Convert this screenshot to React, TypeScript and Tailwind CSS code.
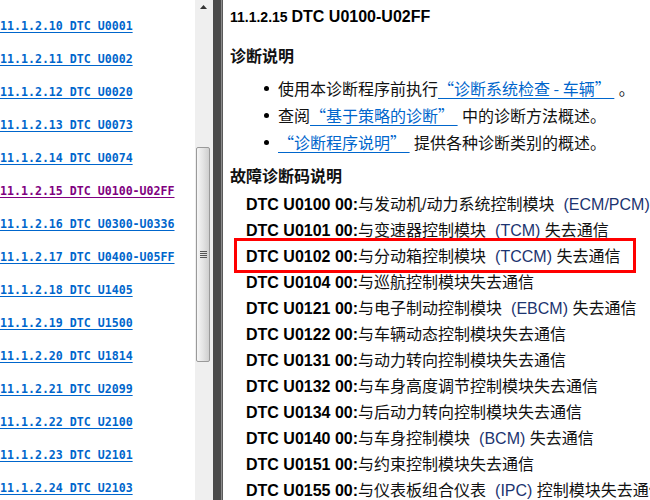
const tocLinks = [
  "11.1.2.10 DTC U0001",
  "11.1.2.11 DTC U0002",
  "11.1.2.12 DTC U0020",
  "11.1.2.13 DTC U0073",
  "11.1.2.14 DTC U0074",
  "11.1.2.15 DTC U0100-U02FF",
  "11.1.2.16 DTC U0300-U0336",
  "11.1.2.17 DTC U0400-U05FF",
  "11.1.2.18 DTC U1405",
  "11.1.2.19 DTC U1500",
  "11.1.2.20 DTC U1814",
  "11.1.2.21 DTC U2099",
  "11.1.2.22 DTC U2100",
  "11.1.2.23 DTC U2101",
  "11.1.2.24 DTC U2103",
];

type Dtc = { code: string; pre: string; abbr?: string; post?: string; marked?: boolean };

const dtcs: Dtc[] = [
  { code: "U0100", pre: "与发动机/动力系统控制模块", abbr: "ECM/PCM", post: "失去通信" },
  { code: "U0101", pre: "与变速器控制模块", abbr: "TCM", post: "失去通信" },
  { code: "U0102", pre: "与分动箱控制模块", abbr: "TCCM", post: "失去通信", marked: true },
  { code: "U0104", pre: "与巡航控制模块失去通信" },
  { code: "U0121", pre: "与电子制动控制模块", abbr: "EBCM", post: "失去通信" },
  { code: "U0122", pre: "与车辆动态控制模块失去通信" },
  { code: "U0131", pre: "与动力转向控制模块失去通信" },
  { code: "U0132", pre: "与车身高度调节控制模块失去通信" },
  { code: "U0134", pre: "与后动力转向控制模块失去通信" },
  { code: "U0140", pre: "与车身控制模块", abbr: "BCM", post: "失去通信" },
  { code: "U0151", pre: "与约束控制模块失去通信" },
  { code: "U0155", pre: "与仪表板组合仪表", abbr: "IPC", post: "控制模块失去通信" },
];

const cjk = "font-['Liberation_Sans','Noto_Sans_CJK_SC',sans-serif]";

export default function App() {
  return (
    <div className="flex h-[500px] w-[650px] overflow-hidden bg-white">
      <TocPane />
      <ScrollBar />
      {/* splitter between the two frames */}
      <div className="flex shrink-0">
        <div className="w-[8px] bg-[#4b4b4b]" />
        <div className="w-[1px] bg-[#8c8c8c]" />
        <div className="w-[1px] bg-[#5a5a5a]" />
      </div>
      <DocPane />
    </div>
  );
}

function TocPane() {
  return (
    <div className="w-[195px] shrink-0 overflow-hidden pt-[10px]">
      {tocLinks.map((t) => (
        <div key={t} className="flex h-[33px] items-center">
          <a
            href="#"
            className={`whitespace-nowrap font-['DejaVu_Sans_Mono',monospace] text-[11.6px] font-bold underline underline-offset-[2px] ${
              t.includes("U0100") ? "text-[#800080]" : "text-[#0066cc]"
            }`}
          >
            {t}
          </a>
        </div>
      ))}
    </div>
  );
}

function ScrollBar() {
  return (
    <div className="flex w-[18px] shrink-0 flex-col bg-[#efefef] pl-[1px]">
      <div className="flex h-[14px] w-[15px] items-center justify-center">
        <svg width="7" height="4" viewBox="0 0 7 4">
          <path d="M3.5 0 L7 4 L0 4 Z" fill="#333" />
        </svg>
      </div>
      <div className="mt-[133px] flex h-[215px] w-[14px] items-center justify-center rounded-[2px] border border-[#9a9a9a] bg-gradient-to-r from-[#f6f6f6] via-[#e4e4e4] to-[#cfcfcf]">
        <div className="flex flex-col gap-[1px]">
          <div className="h-[1px] w-[7px] bg-[#555]" />
          <div className="h-[1px] w-[7px] bg-[#555]" />
          <div className="h-[1px] w-[7px] bg-[#555]" />
          <div className="h-[1px] w-[7px] bg-[#555]" />
        </div>
      </div>
    </div>
  );
}

function DocPane() {
  return (
    <div className={`min-w-0 flex-1 overflow-hidden whitespace-nowrap pl-[7px] pt-[7px] text-[#111] ${cjk}`}>
      <h1 className="font-['Liberation_Sans',sans-serif] text-[14px] font-bold leading-[20px] text-black">
        11.1.2.15 <span className="text-[16px]">DTC U0100-U02FF</span>
      </h1>

      <h2 className="mt-[20px] text-[16px] font-bold leading-[20px]">诊断说明</h2>
      <ul className="mt-[8px] text-[16px]">
        <Bullet>
          使用本诊断程序前执行<Link>“诊断系统检查 - 车辆” </Link> 。
        </Bullet>
        <Bullet>
          查阅<Link>“基于策略的诊断” </Link> 中的诊断方法概述。
        </Bullet>
        <Bullet>
          <Link>“诊断程序说明” </Link> 提供各种诊断类别的概述。
        </Bullet>
      </ul>

      <h2 className="mt-[11px] text-[16px] font-bold leading-[20px]">故障诊断码说明</h2>
      <div className="mt-[5px] pl-[16px]">
        {dtcs.map((d) => (
          <div key={d.code} className="relative h-[26px] text-[16px] leading-[26px]">
            <span className="font-['Liberation_Sans',sans-serif] font-bold text-black">DTC {d.code} 00:</span>
            <span>{d.pre}</span>
            {d.abbr && (
              <span className="ml-[9px] font-['Liberation_Sans',sans-serif] text-[#1c3470]">({d.abbr})</span>
            )}
            {d.post && <span> {d.post}</span>}
            {d.marked && (
              <div className="pointer-events-none absolute left-[-12px] top-[-6px] h-[35px] w-[402px] border-[3px] border-[#ff0000]" />
            )}
          </div>
        ))}
      </div>
    </div>
  );
}

function Bullet({ children }: { children: React.ReactNode }) {
  return (
    <li className="flex h-[27px] items-center pl-[34px]">
      <span className="mr-[9px] h-[5px] w-[5px] shrink-0 rounded-full bg-black" />
      <span>{children}</span>
    </li>
  );
}

function Link({ children }: { children: React.ReactNode }) {
  return (
    <a
      href="#"
      className="whitespace-pre font-['Noto_Sans_CJK_SC',sans-serif] text-[#0066cc] underline underline-offset-[3px]"
    >
      {children}
    </a>
  );
}
